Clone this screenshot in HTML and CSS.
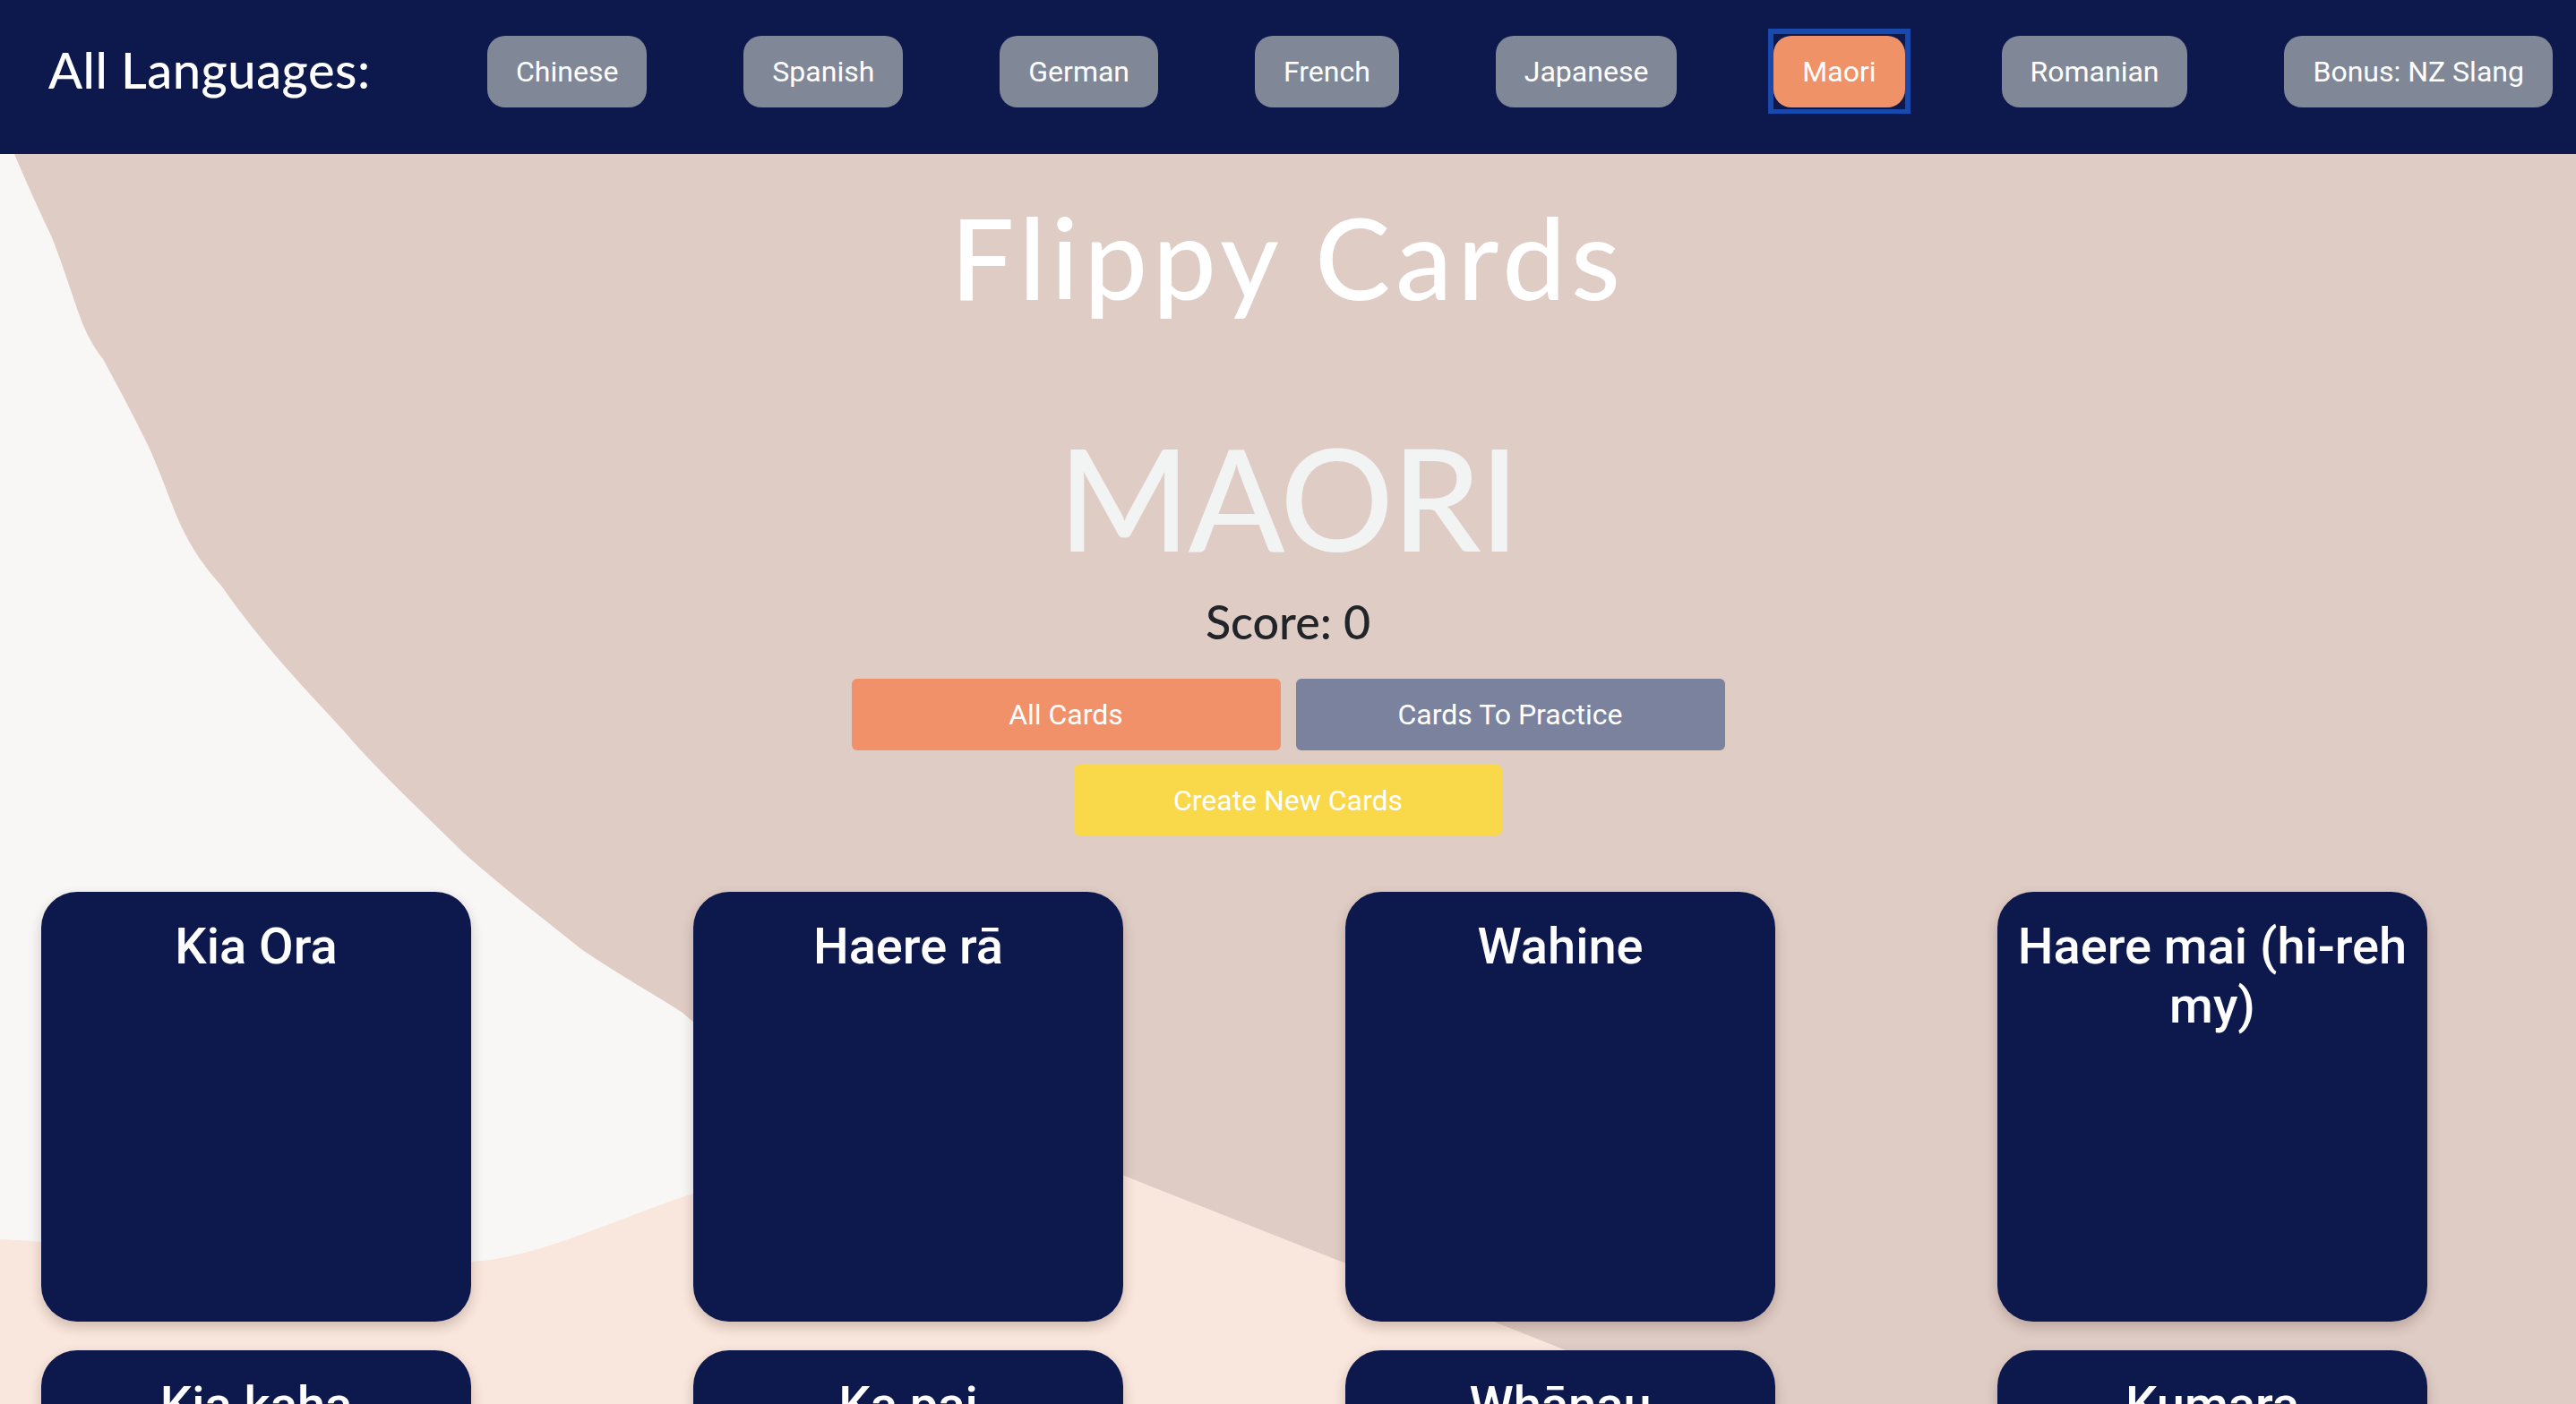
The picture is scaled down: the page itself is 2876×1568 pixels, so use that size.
FILE: index.html
```html
<!DOCTYPE html>
<html lang="en">
<head>
<meta charset="utf-8">
<title>Flippy Cards</title>
<link rel="stylesheet" href="styles.css">
</head>
<body>
<div class="page">
  <svg class="bg" viewBox="0 0 2876 1568" width="2876" height="1568" preserveAspectRatio="none" aria-hidden="true">
    <rect x="0" y="0" width="2876" height="1568" fill="#dfccc5"/>
    <path fill="#f8f7f6" d="M0,172 L16,172 C30,205 45,238 57,263 C72,300 82,335 92,361 C100,380 108,392 115,401 C135,438 150,466 166,499 C180,530 190,560 201,585 C215,615 230,635 247,654 C265,680 285,705 304,728 C335,765 370,800 402,837 C440,878 480,915 517,952 C560,990 605,1025 649,1060 C690,1088 730,1110 762,1131 L900,1250 L1000,1300 L1000,1568 L0,1568 Z"/>
    <path fill="#f9e6dc" d="M0,1384 C150,1392 400,1420 540,1408 C620,1398 700,1355 790,1328 C930,1282 1120,1262 1255,1313 L1900,1568 L0,1568 Z"/>
  </svg>

  <header class="topbar">
    <div class="nav-label">All Languages:</div>
    <nav class="lang-list">
      <button class="lang">Chinese</button>
      <button class="lang">Spanish</button>
      <button class="lang">German</button>
      <button class="lang">French</button>
      <button class="lang">Japanese</button>
      <button class="lang lang-active">Maori</button>
      <button class="lang">Romanian</button>
      <button class="lang">Bonus: NZ Slang</button>
    </nav>
  </header>

  <main class="content">
    <h1 class="title">Flippy Cards</h1>
    <h2 class="language">MAORI</h2>
    <p class="score">Score: 0</p>
    <div class="filters">
      <button class="action action-all">All Cards</button>
      <button class="action action-practice">Cards To Practice</button>
    </div>
    <button class="action action-create">Create New Cards</button>

    <section class="cards">
      <div class="card"><h3 class="card-word">Kia Ora</h3></div>
      <div class="card"><h3 class="card-word">Haere rā</h3></div>
      <div class="card"><h3 class="card-word">Wahine</h3></div>
      <div class="card"><h3 class="card-word">Haere mai (hi-reh my)</h3></div>
      <div class="card"><h3 class="card-word">Kia kaha</h3></div>
      <div class="card"><h3 class="card-word">Ka pai</h3></div>
      <div class="card"><h3 class="card-word">Whānau</h3></div>
      <div class="card"><h3 class="card-word">Kumara</h3></div>
    </section>
  </main>
</div>
</body>
</html>
```

FILE: styles.css
```css
* { box-sizing: border-box; }

html, body {
  margin: 0;
  padding: 0;
}

body {
  font-family: Roboto, "Liberation Sans", sans-serif;
  color: #212529;
  background: #dfccc5;
}

.page {
  position: relative;
  width: 100%;
  height: 100vh;
  overflow: hidden;
}

.bg {
  position: absolute;
  top: 0;
  left: 0;
  z-index: 0;
}

/* ---------- top bar ---------- */
.topbar {
  position: relative;
  z-index: 1;
  height: 172px;
  background: #0d184d;
  display: flex;
  align-items: center;
  padding: 0 26px 12px 54px;
}

.nav-label {
  flex: none;
  width: 490px;
  font-family: Lato, "Open Sans", sans-serif;
  font-weight: 500;
  font-size: 56px;
  letter-spacing: 0.5px;
  color: #ffffff;
  line-height: 1;
  padding-bottom: 4px;
}

.lang-list {
  flex: 1;
  display: flex;
  justify-content: space-between;
  align-items: center;
}

.lang {
  position: relative;
  height: 80px;
  padding: 0 32px;
  border: none;
  border-radius: 20px;
  background: #808898;
  color: #ffffff;
  font-family: Roboto, "Liberation Sans", sans-serif;
  font-size: 32px;
  font-weight: 400;
  line-height: 80px;
  cursor: pointer;
}

.lang-active {
  background: #f09268;
}

.lang-active::after {
  content: "";
  position: absolute;
  top: -8px;
  bottom: -7px;
  left: -6px;
  right: -6px;
  border: 6px solid #1a49ad;
  border-bottom-width: 5px;
}

/* ---------- main ---------- */
.content {
  position: relative;
  z-index: 1;
  display: flex;
  flex-direction: column;
  align-items: center;
}

.title {
  margin: 52px 0 0;
  font-family: Lato, "Open Sans", sans-serif;
  font-weight: 500;
  font-size: 126px;
  letter-spacing: 6px;
  line-height: 1;
  color: #ffffff;
}

.language {
  margin: 126px 0 0;
  font-family: Lato, "Open Sans", sans-serif;
  font-weight: 500;
  font-size: 158px;
  letter-spacing: -2px;
  line-height: 1;
  color: #f2f4f4;
}

.score {
  margin: 34px 0 0;
  font-family: Lato, "Open Sans", sans-serif;
  font-weight: 500;
  font-size: 52px;
  line-height: 1;
  color: #212529;
}

.filters {
  margin-top: 38px;
  display: flex;
  gap: 17px;
}

.action {
  width: 479px;
  height: 80px;
  border: none;
  border-radius: 6px;
  color: #ffffff;
  font-family: Roboto, "Liberation Sans", sans-serif;
  font-size: 32px;
  font-weight: 400;
  cursor: pointer;
}

.action-all { background: #f0916a; }
.action-practice { background: #7b829e; }
.action-create {
  margin-top: 16px;
  width: 478px;
  height: 79px;
  background: #f9d84a;
}

/* ---------- cards ---------- */
.cards {
  align-self: stretch;
  margin-top: 63px;
  padding-left: 46px;
  display: grid;
  grid-template-columns: repeat(4, 480px);
  column-gap: 248px;
  row-gap: 32px;
}

.card {
  height: 480px;
  background: #0d184d;
  border-radius: 40px;
  box-shadow: 0 6px 14px rgba(60, 30, 20, 0.22);
  padding: 28px 16px 0;
  text-align: center;
}

.card-word {
  margin: 0;
  font-family: Roboto, "Liberation Sans", sans-serif;
  font-weight: 500;
  font-size: 56px;
  line-height: 66px;
  color: #ffffff;
}
```
